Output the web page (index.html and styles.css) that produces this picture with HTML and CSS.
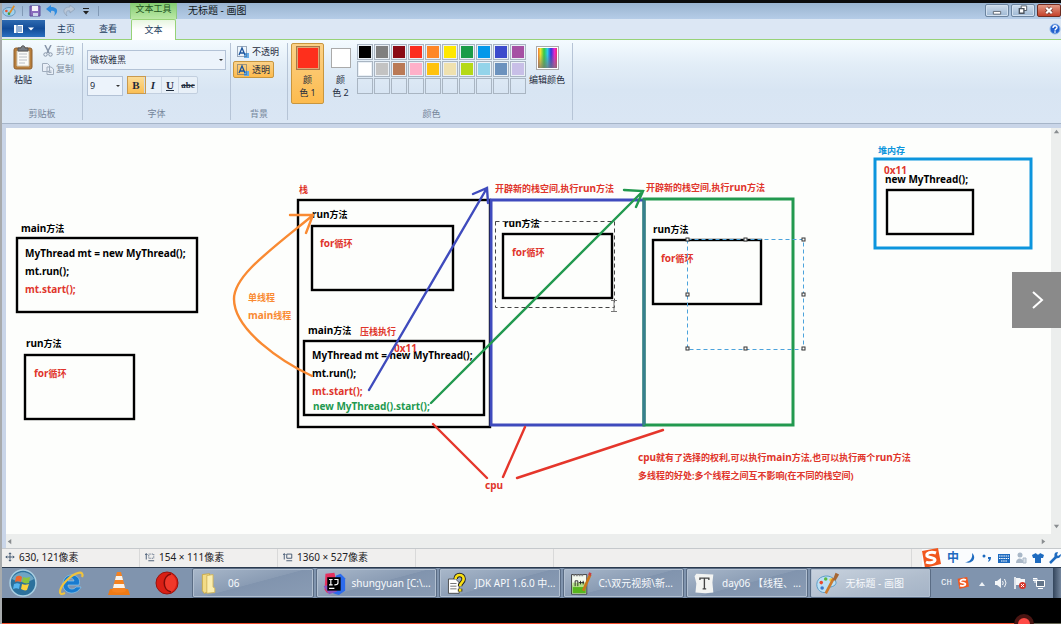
FILE: index.html
```html
<!DOCTYPE html>
<html lang="zh-CN">
<head>
<meta charset="utf-8">
<title>无标题 - 画图</title>
<link rel="stylesheet" href="styles.css">
</head>
<body>
<div class="screen">
  <header class="titlebar">
    <div class="quick">
      <svg class="i16" viewBox="0 0 16 16"><ellipse cx="8" cy="9" rx="7" ry="5" fill="#9fd0ee" stroke="#5e8fb4"/><circle cx="5" cy="8" r="1.5" fill="#e8552c"/><circle cx="8" cy="11" r="1.5" fill="#3f9c3e"/><path d="M9 10 14 2" stroke="#dc8d2a" stroke-width="2"/></svg>
      <i class="bar"></i>
      <button class="plain" aria-label="保存"><svg class="i12" viewBox="0 0 12 12"><path d="M1 1h10v10H1z" fill="#8a6bbd" stroke="#5b4a96"/><path d="M3 1h6v5H3z" fill="#f6f4fb"/><path d="M4 8h5v3H4z" fill="#cdd4ea"/></svg></button>
      <button class="plain" aria-label="撤消"><svg class="i12" viewBox="0 0 12 12"><path d="M5 0 0 4l5 4V6c3-1 5 1 3 5 5-4 4-9-3-9z" fill="#2f8ce0"/></svg></button>
      <button class="plain" aria-label="重做"><svg class="i12" viewBox="0 0 12 12"><path d="m7 0 5 4-5 4V6c-3-1-5 1-3 5-5-4-4-9 3-9z" fill="#b9c7d8" stroke="#8c9fb6" stroke-width=".7"/></svg></button>
      <button class="plain" aria-label="自定义"><svg class="i12" viewBox="0 0 12 12"><path d="M3 3.500h6" stroke="#222"/><path d="M3 6h6L6 9.500z" fill="#222"/></svg></button>
      <i class="bar"></i>
    </div>
    <span class="context">文本工具</span>
    <h1>无标题 - 画图</h1>
    <div class="winbtns">
      <button aria-label="最小化"><svg viewBox="0 0 24 12"><path d="M8 7h8v3H8z" fill="#fff" stroke="#5a6470"/></svg></button>
      <button aria-label="还原"><svg viewBox="0 0 24 12"><path d="M10 1h6v5h-6z" fill="#fff" stroke="#4c5560"/><path d="M8 4h5v5H8z" fill="#fff" stroke="#4c5560" stroke-width="1.5"/></svg></button>
      <button class="close" aria-label="关闭"><svg viewBox="0 0 24 12"><path d="m9 3 6 6M15 3 9 9" stroke="#6b352c" stroke-width="4"/><path d="m9 3 6 6M15 3 9 9" stroke="#fff" stroke-width="2.4"/></svg></button>
    </div>
  </header>

  <nav class="tabs">
    <button class="file" aria-label="文件"><svg viewBox="0 0 22 10"><path d="M1 1h9v8H1z" fill="#fff"/><path d="M4 1v8M5 3h4M5 5h4M5 7h4" stroke="#2d66ad"/><path d="M15 3.500h6l-3 3z" fill="#fff"/></svg></button>
    <button class="tab">主页</button>
    <button class="tab">查看</button>
    <button class="tab active">文本</button>
    <button class="plain help" aria-label="帮助"><svg class="i12" viewBox="0 0 12 12"><circle cx="6" cy="6" r="5" fill="#2361cf" stroke="#8eb4e8"/><path d="M4 5c0-3 4-3 4-.500C8 6 6 5.700 6 7.500M6 8.300v1.500" stroke="#fff" stroke-width="1.400" fill="none"/></svg></button>
  </nav>

  <section class="ribbon">
    <div class="group clip">
      <div class="tools">
        <button class="paste"><svg viewBox="0 0 20 25"><rect x="1" y="3" width="18" height="21" rx="2" fill="#b87f3c" stroke="#8e6030"/><path d="M4 6h12v15H4z" fill="#fbfbf8" stroke="#cfc6b4"/><path d="M6 9h8M6 12h8M6 15h8M6 18h6" stroke="#b9bec4"/><path d="M5 3h3c0-3 4-3 4 0h3v3H5z" fill="#767d84" stroke="#555"/></svg>粘贴</button>
        <div class="stack">
          <button class="dim"><svg class="i12" viewBox="0 0 12 12"><path d="m3 0 4 8M9 0 5 8" stroke="#8795a8" stroke-width="1.500"/><circle cx="3.500" cy="9.500" r="1.700" fill="none" stroke="#8795a8"/><circle cx="8.500" cy="9.500" r="1.700" fill="none" stroke="#8795a8"/></svg>剪切</button>
          <button class="dim"><svg class="i12" viewBox="0 0 12 12"><path d="M.500.500h5l2 2v6h-7zM5 4h4l2.500 2v5.500H5z" fill="#e9eff7" stroke="#a0adbd"/><path d="M6.500 8h3M6.500 9.500h3" stroke="#a0adbd"/></svg>复制</button>
        </div>
      </div>
      <span class="caption">剪贴板</span>
    </div>
    <div class="group font">
      <div class="fontform">
        <label class="combo"><select aria-label="字体"><option>微软雅黑</option></select></label>
        <div class="row">
          <label class="combo size"><select aria-label="字号"><option>9</option></select></label>
          <div class="styles">
            <button class="on"><b>B</b></button><button><i>I</i></button><button><u>U</u></button><button class="strike"><s>abc</s></button>
          </div>
        </div>
      </div>
      <span class="caption">字体</span>
    </div>
    <div class="group back">
      <div class="stack">
        <button class="opt"><svg class="i12" viewBox="0 0 12 12"><path d="M7 7h5v5H7z" fill="#62aae8"/><path d="M.500.500h9v10h-9z" fill="none" stroke="#445a78" stroke-dasharray="1 1"/><path d="m2 9 3-7 3 7M3 7h4" stroke="#1c549c" stroke-width="1.300" fill="none"/></svg>不透明</button>
        <button class="opt chosen"><svg class="i12" viewBox="0 0 12 12"><path d="M7 7h5v5H7z" fill="#62aae8"/><path d="M.500.500h9v10h-9z" fill="none" stroke="#445a78" stroke-dasharray="1 1"/><path d="m2 9 3-7 3 7M3 7h4" stroke="#1c549c" stroke-width="1.300" fill="none"/></svg>透明</button>
      </div>
      <span class="caption">背景</span>
    </div>
    <div class="group colors">
      <div class="tools">
        <button class="slot chosen"><i class="chip red"></i><span>颜<br>色 1</span></button>
        <button class="slot"><i class="chip white"></i><span>颜<br>色 2</span></button>
        <div class="palette">
          <i class="c1"></i><i class="c2"></i><i class="c3"></i><i class="c4"></i><i class="c5"></i><i class="c6"></i><i class="c7"></i><i class="c8"></i><i class="c9"></i><i class="c10"></i>
          <i class="c11"></i><i class="c12"></i><i class="c13"></i><i class="c14"></i><i class="c15"></i><i class="c16"></i><i class="c17"></i><i class="c18"></i><i class="c19"></i><i class="c20"></i>
          <i></i><i></i><i></i><i></i><i></i><i></i><i></i><i></i><i></i><i></i>
        </div>
        <button class="slot edit"><i class="chip rainbow"></i><span>编辑颜色</span></button>
      </div>
      <span class="caption">颜色</span>
    </div>
  </section>

  <main class="work">
    <svg class="paper" role="img" aria-label="线程栈内存示意图">
      <g transform="translate(-6 -128)">
        <g class="ink black">
          <rect x="17" y="238" width="180" height="74"/>
          <rect x="25" y="355" width="109" height="64"/>
          <rect x="298" y="200" width="192" height="227"/>
          <rect x="312" y="226" width="141" height="64"/>
          <rect x="304" y="341" width="180" height="74"/>
          <rect x="503" y="234" width="109" height="64"/>
          <rect x="653" y="240" width="108" height="64"/>
          <rect x="887" y="190" width="86" height="44"/>
        </g>
        <rect class="ink blue" x="491" y="200" width="153" height="225"/>
        <rect class="ink green" x="644" y="199" width="149" height="226"/>
        <path class="ink seam" d="M644 201v223"/>
        <rect class="ink sky" x="875" y="159" width="156" height="89"/>

        <text class="code" x="21" y="232">main<tspan class="han">方法</tspan></text>
        <text class="code" x="25" y="257">MyThread mt = new MyThread();</text>
        <text class="code" x="25" y="275">mt.run();</text>
        <text class="code r" x="25" y="293">mt.start();</text>
        <text class="code" x="26" y="347">run<tspan class="han">方法</tspan></text>
        <text class="code r" x="34" y="377">for<tspan class="han">循环</tspan></text>

        <text class="han r" x="299" y="193">栈</text>
        <text class="code" x="312" y="218">run<tspan class="han">方法</tspan></text>
        <text class="code r" x="320" y="247">for<tspan class="han">循环</tspan></text>
        <text class="han o" x="248" y="301">单线程</text>
        <text class="code o" x="248" y="319">main<tspan class="han">线程</tspan></text>
        <text class="code" x="308" y="334">main<tspan class="han">方法</tspan></text>
        <text class="han r" x="360" y="335">压栈执行</text>
        <text class="code" x="312" y="359">MyThread mt = new MyThread();</text>
        <text class="code r" x="394" y="352">0x11</text>
        <text class="code" x="312" y="377">mt.run();</text>
        <text class="code r" x="312" y="395">mt.start();</text>
        <text class="code g" x="313" y="410">new MyThread().start();</text>

        <text class="han r" x="495" y="192">开辟新的栈空间,执行<tspan class="code">run</tspan>方法</text>
        <text class="han r" x="646" y="191">开辟新的栈空间,执行<tspan class="code">run</tspan>方法</text>
        <text class="code" x="504" y="227">run<tspan class="han">方法</tspan></text>
        <text class="code r" x="512" y="256">for<tspan class="han">循环</tspan></text>
        <text class="code" x="653" y="233">run<tspan class="han">方法</tspan></text>
        <text class="code r" x="661" y="262">for<tspan class="han">循环</tspan></text>

        <text class="code r" x="485" y="489">cpu</text>
        <text class="han r" x="638" y="461"><tspan class="code">cpu</tspan>就有了选择的权利,可以执行<tspan class="code">main</tspan>方法,也可以执行两个<tspan class="code">run</tspan>方法</text>
        <text class="han r" x="638" y="479">多线程的好处:多个线程之间互不影响(在不同的栈空间)</text>

        <text class="han s" x="878" y="154">堆内存</text>
        <text class="code r" x="884" y="174">0x11</text>
        <text class="code" x="885" y="183">new MyThread();</text>

        <path class="ink orange" d="M312 376C282 362 234 330 234 299C234 276 268 252 312 216M290 215h23l-7 18"/>
        <path class="ink blue" d="M369 390 487 188M473 194l14-6 1 15"/>
        <path class="ink green" d="M431 403 643 191M624 190l19 1-7 16"/>
        <path class="ink redline" d="m433 424 54 54M525 427l-22 50M663 430 517 478"/>

        <rect class="dash" x="495.500" y="221.500" width="119" height="86"/>
        <rect class="dash sel" x="687.500" y="239.500" width="116" height="110"/>
        <g class="handle">
          <rect x="686" y="238" width="3" height="3"/><rect x="744" y="238" width="3" height="3"/><rect x="802" y="238" width="3" height="3"/>
          <rect x="686" y="293" width="3" height="3"/><rect x="802" y="293" width="3" height="3"/>
          <rect x="686" y="347" width="3" height="3"/><rect x="744" y="347" width="3" height="3"/><rect x="802" y="347" width="3" height="3"/>
        </g>
        <path d="M611 300.500h6M611 311.500h6M614 300v12" stroke="#777"/>
      </g>
    </svg>
    <div class="vscroll"><svg viewBox="0 0 8 8"><path d="m4 2 3 4H1z"/></svg><svg viewBox="0 0 8 8"><path d="m4 6 3-4H1z"/></svg></div>
    <div class="hscroll"><svg viewBox="0 0 8 8"><path d="m2 4 4-3v6z"/></svg><svg viewBox="0 0 8 8"><path d="M6 4 2 1v6z"/></svg></div>
    <button class="next" aria-label="下一个"><svg viewBox="0 0 12 20"><path d="m1 2 9 8-9 8" fill="none" stroke="#fff" stroke-width="2"/></svg></button>
  </main>

  <footer class="status">
    <span class="cell"><svg viewBox="0 0 12 12"><path d="M6 1v10M1 6h10M4.500 2.500 6 1l1.500 1.500M4.500 9.500 6 11l1.500-1.500M2.500 4.500 1 6l1.500 1.500M9.500 4.500 11 6 9.500 7.500"/></svg>630, 121像素</span>
    <span class="cell"><svg viewBox="0 0 12 12"><path d="M1.500 2v7M0 3.500 1.500 2 3 3.500M4 10.500h7"/><path d="M4.500 2.500h6v5h-6z" stroke-dasharray="1 1"/></svg>154 × 111像素</span>
    <span class="cell"><svg viewBox="0 0 12 12"><path d="M1.500 2v7M0 3.500 1.500 2 3 3.500M4 10.500h7M4.500 2.500h6v5h-6z"/></svg>1360 × 527像素</span>
    <span class="cell"></span>
    <span class="cell grow"></span>
    <div class="ime">
      <svg class="sogou" viewBox="0 0 20 20"><path d="M1 3 17 0l3 16-16 4z" fill="#f1571e"/><path d="M15 5C10 3 5 5 6 8c1 2 8 1 8 4 0 2-5 4-9 2" fill="none" stroke="#fff" stroke-width="3"/></svg>
      <span class="zh">中</span>
      <svg class="i12" viewBox="0 0 12 12"><path d="M8 1c5 4 1 12-7 9 5 0 8-4 7-9z" fill="#1d6bc0"/></svg>
      <svg class="i12" viewBox="0 0 12 12"><circle cx="3" cy="4" r="1.500" fill="#1d6bc0"/><path d="M7 5h3c0 3-1 4-3 5l1-3H7z" fill="#1d6bc0"/></svg>
      <svg class="i12" viewBox="0 0 12 12"><path d="M0 2h12v9H0z" fill="#1d6bc0"/><path d="M1 4h10M1 6.500h10M3 9h6" stroke="#fff" stroke-dasharray="1.500 .7"/></svg>
      <svg class="i12" viewBox="0 0 12 12"><circle cx="5" cy="3" r="2.500" fill="#a9b8c8"/><path d="M1 11c0-6 7-6 8 0z" fill="#a9b8c8"/><path d="M8 6h3v5H8z" fill="#d6dee6" stroke="#a9b8c8"/></svg>
      <svg class="i12" viewBox="0 0 12 12"><path d="m4 1-4 2 1 3h2v5h6V6h2l1-3-4-2c-1 2-3 2-4 0z" fill="#1d6bc0"/></svg>
      <svg class="i12" viewBox="0 0 12 12"><path d="m1 11 6-6" stroke="#1d6bc0" stroke-width="2.500"/><path d="M9 0C5 0 5 3 6 6c3 1 6 0 6-4L9 4 8 3z" fill="#1d6bc0"/></svg>
    </div>
  </footer>

  <div class="taskbar">
    <div class="launch">
      <button class="plain" aria-label="开始"><svg viewBox="0 0 28 28"><circle cx="14" cy="14" r="13" fill="#2c719c" stroke="#a9cfe2" stroke-width="1.500"/><path d="M3 10c4-9 18-9 22 0-6 4-16 4-22 0z" fill="#9bc8de" opacity=".6"/><path d="M7 8c3-2 4-1 6 0l-1 5c-2-1-4-1-6 0z" fill="#f0652b"/><path d="M14 8c2 1 4 1 7 0l-1 6c-3 1-5 0-7-1z" fill="#8ac53f"/><path d="M5 15c3-1 4-1 6 0l-1 5c-2-1-3-1-6 0z" fill="#55b4ee"/><path d="M13 15c2 1 4 1 7 0l-2 6c-2 1-4 0-6-1z" fill="#fbd13c"/></svg></button>
      <button class="plain" aria-label="Internet Explorer"><svg viewBox="0 0 28 28"><path d="M22 16H11c0 5 6 5 8 2h5c-4 9-19 8-18-4C7 2 26 4 22 16zm-5-4c-1-4-6-4-6 0z" fill="#187bd0" stroke="#95d4f5" stroke-width=".6"/><path d="M25 8c3-7-7-5-15 3S0 28 8 24" fill="none" stroke="#f0c33c" stroke-width="2.200"/></svg></button>
      <button class="plain" aria-label="VLC"><svg viewBox="0 0 28 28"><path d="M5 20h18l2 6H3z" fill="#ee7a16"/><path d="m12 3h4l5 19c-3 2-11 2-14 0z" fill="#f58220"/><path d="m11 7h6l1 4h-8zM9 15h10l1 4H8z" fill="#f7f3ed"/></svg></button>
      <button class="plain" aria-label="播放器"><svg viewBox="0 0 28 28"><circle cx="14" cy="14" r="11" fill="#d91f15" stroke="#99130d"/><path d="M18 5C9 7 9 21 18 23c7-4 7-14 0-18z" fill="#f0382a"/><path d="M18 5C9 7 9 21 18 23" stroke="#7d0c08" stroke-width="1.500" fill="none"/></svg></button>
    </div>
    <div class="tasks">
      <button><svg viewBox="0 0 28 28"><path d="m6 4 8-1v20l-6 2-2-3z" fill="#f3dc86" stroke="#c9a945"/><path d="m11 5 7-1v14l2 1v5l-9 1z" fill="#fbeeb0" stroke="#cfb254"/></svg><span>06</span></button>
      <button><svg viewBox="0 0 28 28"><path d="m5 3 10-1 2 9-10 14-3-4z" fill="#e5315f"/><path d="m17 5 5-2 5 5v14l-7 5-9-3z" fill="#2c6bec"/><path d="m3 17 6 9 9-3-4-9z" fill="#8a54c0"/><path d="M7 7h15v15H7z" fill="#000"/><path d="M9 9.500h4M11 9.500v6M9 15.500h4M15 9.500h4v4q0 2-4 2M9 19.500h6" stroke="#fff" stroke-width="1.300" fill="none"/></svg><span>shungyuan [C:\...</span></button>
      <button><svg viewBox="0 0 28 28"><path d="M5 9h8l4 4v12H5z" fill="#fff" stroke="#444"/><path d="M7 14h7M7 17h7M7 20h7" stroke="#666"/><path d="M13 9c0-6 9-6 9 0 0 4-4 4-4 8M18 20v3" stroke="#222" stroke-width="5" fill="none"/><path d="M13 9c0-6 9-6 9 0 0 4-4 4-4 8M18 20v3" stroke="#f9df12" stroke-width="3" fill="none"/></svg><span>JDK API 1.6.0 中...</span></button>
      <button><svg viewBox="0 0 28 28"><path d="M4 4h17v22H4z" fill="#f5faee" stroke="#333"/><path d="M5 16h15v9H5z" fill="#57b51d"/><path d="M5 13h15v5H5z" fill="#b5df89"/><path d="M6 5h12" stroke="#888" stroke-width="2" stroke-dasharray="2 1"/><path d="M8 17v-6h3v6M12 13h6M14 11v4M17 11v4" stroke="#222" fill="none"/><path d="m25 4-8 18" stroke="#ca7619" stroke-width="3"/><path d="m24 5 1-3" stroke="#c64043" stroke-width="3"/></svg><span>C:\双元视频\新...</span></button>
      <button><svg viewBox="0 0 28 28"><path d="m6 3 19 1-1 9 1 11-9 1-11-1 1-10-2-8z" fill="#f3f4f2"/><path d="M10 10V8h10v2M15 8v12M13 20h4" stroke="#444" stroke-width="1.500" fill="none"/></svg><span>day06 【线程、...</span></button>
      <button class="current"><svg viewBox="0 0 28 28"><path d="M2 15C2 6 14 3 20 8c6 4 4 9-3 10-4 1-1 5-5 6-5 1-10-3-10-9z" fill="#bce0f4" stroke="#5296c4"/><circle cx="7" cy="13" r="2" fill="#e84b31"/><circle cx="12" cy="9" r="2" fill="#5cb743"/><circle cx="8" cy="19" r="2" fill="#3e78cd"/><circle cx="18" cy="10" r="2" fill="#f1ca32"/><path d="m12 25 9-17" stroke="#cc7a2d" stroke-width="3"/><path d="m20 10 3-8 4 2-4 7z" fill="#a66633"/></svg><span>无标题 - 画图</span></button>
    </div>
    <div class="tray">
      <span class="lang">CH</span>
      <svg class="i12" viewBox="0 0 20 20"><path d="M1 3 17 0l3 16-16 4z" fill="#f1571e"/><path d="M15 5C10 3 5 5 6 8c1 2 8 1 8 4 0 2-5 4-9 2" fill="none" stroke="#fff" stroke-width="3"/></svg>
      <svg class="i12" viewBox="0 0 12 12"><path d="m6 5 3 4H3z" fill="#eef2f6"/></svg>
      <svg class="i12" viewBox="0 0 12 12"><path d="M0 4h2l4-3v10L2 8H0z" fill="#f4f6f8"/><path d="M7.500 4q1.500 2 0 4M9.500 2q3 4 0 8" stroke="#f4f6f8" fill="none"/></svg>
      <svg class="i12" viewBox="0 0 12 12"><path d="M1 0v12" stroke="#fff" stroke-width="1.500"/><path d="M2 1h4l1 1h4v6H2z" fill="#f4f6f8"/><circle cx="8.500" cy="8.500" r="3.500" fill="#d5372c"/><path d="m7 7 3 3M10 7l-3 3" stroke="#fff"/></svg>
      <svg class="i12" viewBox="0 0 12 12"><path d="M3.500 3.500h8v6h-8z" fill="#63758a" stroke="#fff"/><path d="M5 11.500h5M2 1v5M0 1.500h4v2H0z" stroke="#fff" fill="none"/></svg>
    </div>
    <button class="peek" aria-label="显示桌面"></button>
  </div>

  <div class="player"><input type="range" class="seek" aria-label="播放进度" min="0" max="1000" value="970"></div>
</div>
</body>
</html>
```
FILE: styles.css
```css
* { box-sizing: border-box; }
body {
  margin: 0;
  background: #a8abad;
  color: #1e2b3c;
  font-family: "Noto Sans", "Noto Sans CJK SC", sans-serif;
  font-size: 9px;
  line-height: 12px;
}
button { font: inherit; color: inherit; padding: 0; border: 0; background: none; }
svg { display: block; flex: none; }
.screen {
  display: flex;
  flex-direction: column;
  height: 100vh;
  overflow: hidden;
  border-top: 3px solid #0c0c0c;
  padding-left: 2px;
}
.i16 { width: 14px; height: 14px; }
.i12 { width: 12px; height: 12px; }

/* title bar */
.titlebar {
  display: flex;
  flex: none;
  height: 16px;
  background: linear-gradient(#9ab4d0, #b5cce7);
}
.quick { display: flex; align-items: center; gap: 6px; width: 128px; }
.quick .bar { width: 1px; height: 10px; background: #8199b5; }
.quick .plain + .plain { margin-left: -1px; }
.context {
  width: 47px;
  text-align: center;
  color: #24551f;
  background: linear-gradient(#83cc71, #bce9a7);
  border: 1px solid #8ec981;
  border-width: 0 1px;
}
.titlebar h1 { margin: 0 0 0 11px; font-size: 10px; font-weight: 400; line-height: 15px; color: #101820; }
.winbtns { display: flex; gap: 2px; margin-left: auto; padding-top: 1px; }
.winbtns button {
  width: 24px;
  height: 13px;
  border: 1px solid #6b849f;
  border-radius: 2px;
  background: linear-gradient(#cddcec, #9fb9d4);
  box-shadow: inset 0 0 0 1px #d3e1f0;
}
.winbtns svg { width: 22px; height: 11px; }
.winbtns .close { background: linear-gradient(#e29a86, #c4412a); border-color: #6e2c20; box-shadow: none; }

/* tabs */
.tabs {
  display: flex;
  flex: none;
  align-items: flex-end;
  height: 21px;
  background: #dce7f4;
  border-bottom: 1px solid #97d277;
}
.file {
  display: flex;
  align-items: center;
  justify-content: center;
  align-self: flex-start;
  width: 43px;
  height: 17px;
  margin-top: 1px;
  background: linear-gradient(#2e6ab0, #124c98 50%, #2a6fc0);
}
.file svg { width: 22px; height: 10px; }
.tab { width: 42px; height: 20px; color: #24405f; }
.tab.active {
  width: 45px;
  margin: 0 0 -1px 2px;
  height: 21px;
  background: linear-gradient(#e6f6df, #fff 50%);
  border: 1px solid #97d277;
  border-bottom: 0;
  border-radius: 2px 2px 0 0;
}
.help { margin: 0 0 4px auto; }

/* ribbon */
.ribbon {
  display: flex;
  flex: none;
  height: 84px;
  padding: 3px 0;
  background: linear-gradient(#f4fbff, #e2edf7 30%, #d8e5f3 60%, #dae6f4);
  border-bottom: 1px solid #a6b5c8;
}
.group { display: flex; flex-direction: column; justify-content: space-between; border-right: 1px solid #b6c4d6; }
.caption { text-align: center; color: #75859a; }
.tools { display: flex; }
.clip { width: 81px; }
.clip .tools { padding-left: 10px; gap: 8px; }
.paste { display: flex; flex-direction: column; align-items: center; width: 22px; gap: 4px; padding-top: 2px; line-height: 12px; white-space: nowrap; }
.paste svg { width: 20px; height: 25px; }
.stack { display: flex; flex-direction: column; align-items: flex-start; gap: 2px; }
.dim { display: flex; align-items: center; gap: 2px; height: 16px; color: #8592a3; }
.font { width: 148px; padding: 0 4px; }
.fontform { display: flex; flex-direction: column; gap: 6px; padding-top: 7px; }
.row { display: flex; gap: 4px; }
.combo { position: relative; display: block; }
.combo select {
  appearance: none;
  display: block;
  width: 100%;
  height: 20px;
  padding: 0 2px;
  border: 1px solid #b3c2d6;
  border-radius: 0;
  background: #ecf3fb;
  color: #1e2b3c;
  font: inherit;
}
.combo::after {
  content: "";
  position: absolute;
  right: 3px;
  top: 9px;
  border: 2px solid transparent;
  border-top-color: #333;
}
.size { width: 36px; }
.styles { display: flex; height: 18px; border: 1px solid #c2cfdf; border-radius: 2px; font: 11px/15px "Liberation Serif", serif; background: #e8f0f8; }
.styles button { width: 17px; border-right: 1px solid #cfdae7; font-weight: 700; }
.styles .strike { width: 18px; border-right: 0; font-size: 9px; }
.styles .on { background: linear-gradient(#fbdc97, #fbbf54); box-shadow: 0 0 0 1px #c99a4f; }
.back { width: 57px; padding: 0 2px; }
.opt { display: flex; align-items: center; gap: 3px; height: 17px; margin-top: -1px; padding: 0 3px; border: 1px solid transparent; white-space: nowrap; }
.back .opt:first-child { margin-top: 0; }
.chosen { background: linear-gradient(#fbd288, #fdbb4e); border: 1px solid #c8963f; border-radius: 2px; }
.colors { width: 285px; padding-left: 3px; }
.slot { display: flex; flex-direction: column; align-items: center; gap: 3px; width: 33px; height: 61px; padding-top: 2px; line-height: 13px; border: 1px solid transparent; white-space: nowrap; }
.slot.chosen { border: 1px solid #c8963f; }
.chip { display: block; width: 20px; height: 20px; margin: 2px; border: 1px solid #aaa; box-shadow: inset 0 0 0 1px #fff; }
.slot .red { width: 24px; height: 24px; margin: 0; background: #fe2f1c; border-color: #a5794a; box-shadow: inset 0 0 0 1px #e0a673; }
.white { background: #fff; }
.rainbow { width: 23px; height: 24px; margin: 0; background: linear-gradient(transparent 30%, #777c), linear-gradient(90deg, #ef4a38, #f4e330, #35c942, #2ccbe6, #3035dd, #e528ce, #f02e40); }
.palette { display: grid; grid-template-columns: repeat(10, 16px); grid-auto-rows: 16px; gap: 1px; height: 50px; margin-top: 1px; }
.palette i { border: 1px solid #a9b5c2; box-shadow: inset 0 0 0 1px #eaf0f6; }
.palette i:nth-child(n + 21) { box-shadow: none; }
.edit { width: 40px; margin-left: 1px; }
.c1 { background: #000; } .c2 { background: #7f7f7f; } .c3 { background: #8a0a14; } .c4 { background: #fc2d20; } .c5 { background: #ff8727; }
.c6 { background: #ffe800; } .c7 { background: #1a9c48; } .c8 { background: #0498ea; } .c9 { background: #3b4acc; } .c10 { background: #a651a4; }
.c11 { background: #fff; } .c12 { background: #c3c3c3; } .c13 { background: #ba7a57; } .c14 { background: #ffb0c9; } .c15 { background: #ffc20e; }
.c16 { background: #efe1af; } .c17 { background: #b5d916; } .c18 { background: #94d4ea; } .c19 { background: #6c92be; } .c20 { background: #c8bfe7; }

/* drawing area */
.work {
  position: relative;
  display: grid;
  flex: 1;
  grid-template: minmax(0, 1fr) 14px / minmax(0, 1fr) 10px;
  min-height: 0;
  padding: 4px 0 0 4px;
  background: #c9d5e8;
}
.paper { width: 100%; height: 100%; background: #fdfefc; }
.vscroll, .hscroll { display: flex; justify-content: space-between; align-items: center; background: #eceeed; }
.vscroll { flex-direction: column; padding-bottom: 4px; }
.hscroll { grid-column: 1 / -1; padding: 0 14px 0 0; }
.work > div svg { width: 7px; height: 7px; fill: #898d90; }
.next {
  position: absolute;
  right: 0;
  top: 148px;
  display: grid;
  place-items: center;
  width: 49px;
  height: 56px;
  padding-left: 2px;
  background: #8a8a8a;
}
.next svg { width: 12px; height: 20px; }
.ink { fill: none; stroke-width: 2.4; }
path.ink { stroke-linecap: round; }
.black { stroke: #000; }
.blue { stroke: #3f4bbd; }
.green { stroke: #22994f; }
.seam { stroke: #377f8f; }
.orange { stroke: #f98a32; }
.redline { stroke: #e5362b; }
.sky { stroke: #0c95dd; stroke-width: 3; }
rect.blue, rect.green { stroke-width: 3; }
.dash { fill: none; stroke: #444; stroke-dasharray: 4 3; }
.sel { stroke: #4ba3dc; }
.handle { fill: #fff; stroke: #333; }
.paper text { fill: #000; font-weight: 700; white-space: pre; }
.paper .code { font-size: 10px; }
.paper .han { font-size: 9px; }
.paper .r { fill: #e0352b; }
.paper .o { fill: #f98a32; }
.paper .g { fill: #22994f; }
.paper .s { fill: #0c95dd; }

/* status bar */
.status { display: flex; flex: none; height: 19px; background: #f0efee; border-top: 1px solid #c5c9cc; font-size: 10px; color: #1c2024; }
.cell { display: flex; align-items: center; gap: 4px; width: 138px; padding: 0 0 2px 3px; border-right: 1px solid #d9d9d9; white-space: nowrap; }
.cell svg { width: 10px; height: 10px; fill: none; stroke: #2e4562; }
.cell:nth-child(2), .cell:nth-child(3) { padding-left: 5px; }
.grow { flex: 1; }
.ime { display: flex; align-items: center; gap: 5px; padding-left: 8px; background: linear-gradient(90deg, #f0efee 10px, #fafcfe 10px); }
.sogou { width: 22px; height: 20px; }
.zh { color: #1d6bc0; font-size: 12px; font-weight: 700; }

/* task bar */
.taskbar { display: flex; flex: none; height: 31px; background: #8094ae; border-top: 1px solid #2b3a4e; color: #f6f9fc; font-size: 10px; }
.launch { display: flex; justify-content: space-between; align-items: center; width: 190px; padding: 0 11px 0 7px; }
.launch svg { width: 28px; height: 28px; }
.tasks { display: flex; flex: 1; gap: 2px; min-width: 0; }
.tasks button {
  display: flex;
  flex: 1;
  align-items: center;
  gap: 6px;
  min-width: 0;
  padding-left: 4px;
  border: 1px solid #5a6c84;
  border-radius: 2px;
  box-shadow: inset 0 0 0 1px #b2c0d1;
  background: linear-gradient(165deg, #a9b8ca, #8a9cb4 50%, #8194ae 51%, #8a9cb4);
  white-space: nowrap;
}
.tasks svg { width: 25px; height: 25px; }
.tasks .current { background: linear-gradient(165deg, #c9d3df, #b0bdcd 60%, #a4b3c6); }
.tray { display: flex; align-items: center; gap: 7px; width: 122px; padding-left: 10px; }
.lang { margin-right: -2px; font: 9px/12px "Liberation Mono", monospace; }
.peek { width: 8px; background: linear-gradient(90deg, #33455c, #74869d); }

/* video progress */
.player { display: flex; flex: none; align-items: flex-end; height: 26px; overflow: hidden; background: #000; }
.seek { appearance: none; flex: 1; height: 1px; margin: 0; background: linear-gradient(90deg, #f4502f 97%, #665 97%); }
.seek::-webkit-slider-thumb { appearance: none; width: 12px; height: 12px; border-radius: 50%; background: #ff4a45; box-shadow: 0 0 0 4px #4a1512; }
```
